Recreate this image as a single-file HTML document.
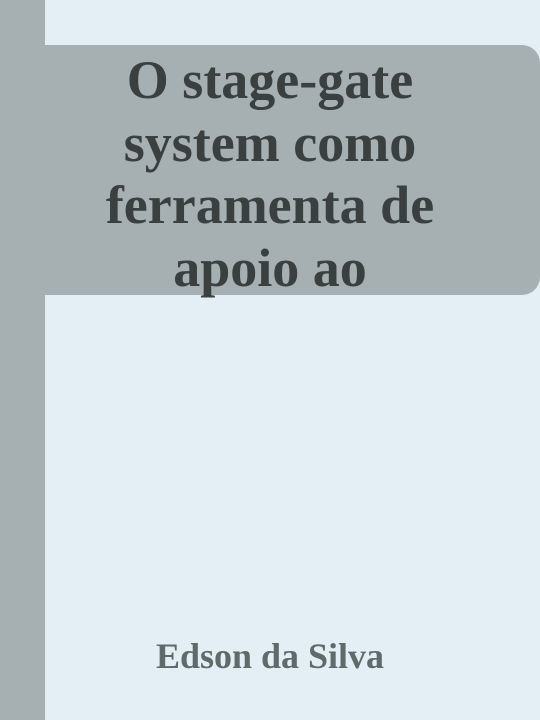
<!DOCTYPE html>
<html><head><style>
body{margin:0;width:540px;height:720px;background:#e3eff4;position:relative;overflow:hidden;font-family:"Liberation Serif",serif;}
.side{position:absolute;left:0;top:0;width:45px;height:720px;background:#a6afb2;}
.box{position:absolute;left:45px;top:45px;width:495px;height:250px;background:#a6afb2;border-radius:0 18px 18px 0;}
.title{position:absolute;left:0;width:540px;top:49px;text-align:center;font-weight:bold;font-size:54px;line-height:62.5px;color:#39403f;}
.author{position:absolute;left:0;width:540px;top:635px;text-align:center;font-weight:bold;font-size:36px;line-height:42px;color:#5f6a6b;}
</style></head><body>
<div class="side"></div><div class="box"></div>
<div class="title">O stage-gate<br>system como<br>ferramenta de<br>apoio ao</div>
<div class="author">Edson da Silva</div>
</body></html>
